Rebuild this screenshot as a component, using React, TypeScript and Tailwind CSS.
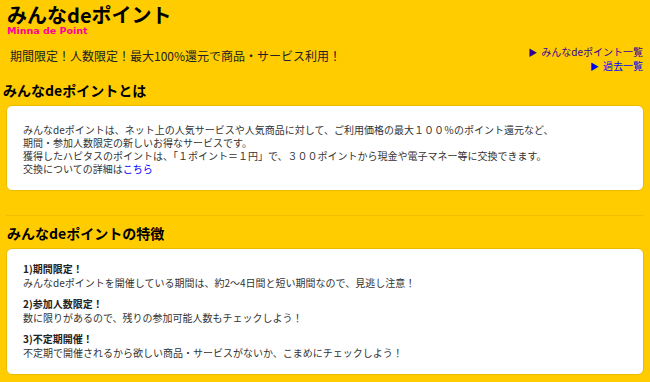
const jp = "font-['Noto_Sans_CJK_JP',sans-serif]";

const features = [
  {
    title: "1)期間限定！",
    body: "みんなdeポイントを開催している期間は、約2〜4日間と短い期間なので、見逃し注意！",
  },
  {
    title: "2)参加人数限定！",
    body: "数に限りがあるので、残りの参加可能人数もチェックしよう！",
  },
  {
    title: "3)不定期開催！",
    body: "不定期で開催されるから欲しい商品・サービスがないか、こまめにチェックしよう！",
  },
];

export default function App() {
  return (
    <div className={`w-[650px] h-[382px] overflow-hidden bg-[#ffcc00] text-[#222] ${jp}`}>
      {/* header */}
      <div className="pl-[7px] pt-[3px]">
        <h1 className="text-[20px] leading-[23px] font-bold text-black">みんなdeポイント</h1>
        <div className="font-['DejaVu_Sans',sans-serif] text-[9.5px] leading-[10px] font-bold text-[#ff0099]">
          Minna de Point
        </div>
      </div>

      <div className="flex justify-between items-start mt-[9px] pl-[10px] pr-[7px]">
        <p className="text-[12px] leading-[16px] mt-[3px]">期間限定！人数限定！最大100%還元で商品・サービス利用！</p>
        <ul className="flex flex-col items-end text-[10px] leading-[13px]">
          <li className="text-[#330099]">
            <span className="text-[9px] mr-[4px]">▶</span>みんなdeポイント一覧
          </li>
          <li className="text-[#0000ff]">
            <span className="text-[9px] mr-[4px]">▶</span>過去一覧
          </li>
        </ul>
      </div>

      {/* about */}
      <h2 className="mt-[8px] pl-[3px] text-[14px] leading-[18px] font-bold text-black">みんなdeポイントとは</h2>
      <div className="mx-[6px] mt-[6px] bg-white border border-[#e9bc00] rounded-[6px] pl-[16px] pt-[17px] pb-[15px] text-[10px] leading-[13px] text-[#333]">
        <p>みんなdeポイントは、ネット上の人気サービスや人気商品に対して、ご利用価格の最大１００％のポイント還元など、</p>
        <p>期間・参加人数限定の新しいお得なサービスです。</p>
        <p>獲得したハピタスのポイントは、「１ポイント＝１円」で、３００ポイントから現金や電子マネー等に交換できます。</p>
        <p>
          交換についての詳細は<span className="text-[#0000ff]">こちら</span>
        </p>
      </div>

      <hr className="mx-[6px] mt-[24px] border-0 border-t border-[#f0bf00]" />

      {/* features */}
      <h2 className="mt-[8px] pl-[7px] text-[14px] leading-[18px] font-bold text-black">みんなdeポイントの特徴</h2>
      <div className="mx-[6px] mt-[6px] bg-white border border-[#e9bc00] rounded-[6px] pl-[16px] pt-[13px] pb-[14px] text-[10px] leading-[14px] text-[#333] flex flex-col gap-[7px]">
        {features.map((f) => (
          <div key={f.title}>
            <p className="font-bold text-[#222]">{f.title}</p>
            <p>{f.body}</p>
          </div>
        ))}
      </div>
    </div>
  );
}
